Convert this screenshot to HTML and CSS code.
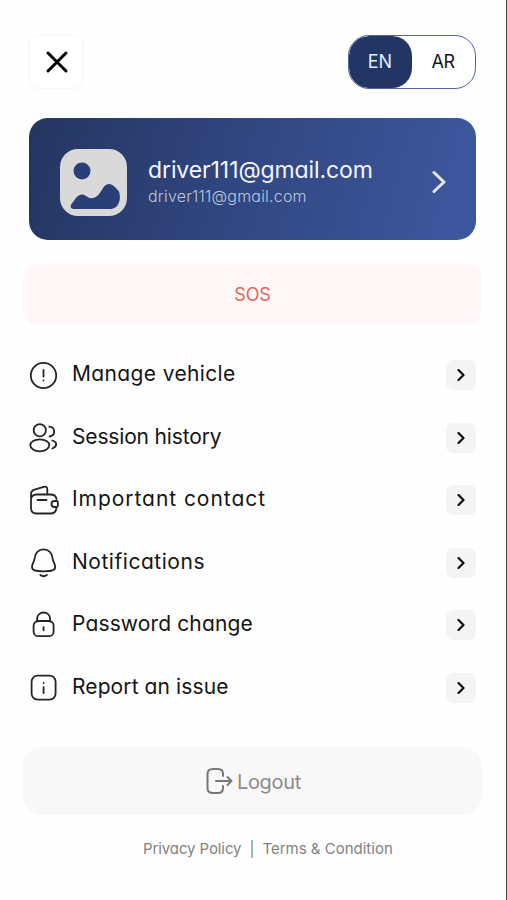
FILE: index.html
```
<!DOCTYPE html>
<html lang="en">
<head>
<meta charset="utf-8">
<title>Menu</title>
<link rel="stylesheet" href="styles.css">
</head>
<body>
<main class="screen">
  <header class="top">
    <button class="close" aria-label="Close"><svg width="24" height="24" viewBox="0 0 24 24"><path d="M3 3 21 21M21 3 3 21"/></svg></button>
    <div class="lang"><span class="lang-on">EN</span><span class="lang-off">AR</span></div>
  </header>
  <section class="profile">
    <svg class="avatar" width="67" height="67" viewBox="0 0 67 67"><rect width="67" height="67" rx="18" fill="#d9d9d9"/><circle cx="22" cy="22" r="8.500" fill="#293f76"/><path d="M12 59.500C9.500 58 11 55.500 13 53C16 49 18.500 45 22.500 45.500C26 46 28 50 33 49C41 48 42 35 49 35C53 35 56 39 59 42.500C61.500 50 59 60 50 60H15Q13 60 12 59.500Z" fill="#293f76"/></svg>
    <div class="who"><div class="name">driver111@gmail.com</div><div class="mail">driver111@gmail.com</div></div>
    <svg class="go" width="14" height="24" viewBox="0 0 14 24"><path d="M2 2.500 12 12 2 21.500"/></svg>
  </section>
  <button class="sos">SOS</button>
  <nav class="menu">
    <a class="row"><svg class="icon" viewBox="0 0 30 30"><circle cx="14.500" cy="15.500" r="12.700"/><path d="M14.500 10V16.500M14.500 20.300V20.600"/></svg><span class="label manage">Manage vehicle</span><span class="next"><svg width="8" height="12" viewBox="0 0 8 12"><path d="M1.500 1 6.500 6 1.500 11"/></svg></span></a>
    <a class="row"><svg class="icon" viewBox="0 0 30 30"><circle cx="10.800" cy="7.300" r="6.100"/><ellipse cx="10.800" cy="22.300" rx="9.500" ry="6"/><path d="M20.200 3.700C26.500 4 27 12.500 20.500 13.500M23.300 17.500C28.500 19 28.500 23.500 23.300 25.500"/></svg><span class="label session">Session history</span><span class="next"><svg width="8" height="12" viewBox="0 0 8 12"><path d="M1.500 1 6.500 6 1.500 11"/></svg></span></a>
    <a class="row"><svg class="icon" viewBox="0 0 30 30"><path d="M27.500 14C27 11 25 9.500 21.500 9.500H7.500C4 9.500 2 11.500 2 15V23C2 26.500 4 28.500 7.500 28.500H21.500C25 28.500 27 26.500 27.500 23M2 13V9C2 6.500 3 5.500 5.500 4.700L14.700 1.800C17 1.100 18.300 2.200 18.300 4.200V9.500M8.500 15H17.500M27.500 16H25.500C21.500 16 21.500 22 25.500 22H27.500Q28.900 22 28.900 20.500V17.500Q28.900 16 27.500 16Z"/></svg><span class="label contact">Important contact</span><span class="next"><svg width="8" height="12" viewBox="0 0 8 12"><path d="M1.500 1 6.500 6 1.500 11"/></svg></span></a>
    <a class="row"><svg class="icon" viewBox="0 0 30 30"><path d="M14.600 1.300C9.500 1.300 6 5 5.700 10C5.500 13.500 3 15.500 3 19C3 22.500 6.500 23.300 14.600 23.300S26.200 22.500 26.200 19C26.200 15.500 23.700 13.500 23.500 10C23.200 5 19.700 1.300 14.600 1.300ZM11.300 27Q14.600 29.500 17.900 27"/></svg><span class="label notify">Notifications</span><span class="next"><svg width="8" height="12" viewBox="0 0 8 12"><path d="M1.500 1 6.500 6 1.500 11"/></svg></span></a>
    <a class="row"><svg class="icon" viewBox="0 0 30 30"><rect x="4.600" y="11" width="20" height="15.200" rx="4.800"/><path d="M8.100 11.500V9C8.100 .3 21.100 .3 21.100 9V11.500M14.600 17.200V20.300"/></svg><span class="label password">Password change</span><span class="next"><svg width="8" height="12" viewBox="0 0 8 12"><path d="M1.500 1 6.500 6 1.500 11"/></svg></span></a>
    <a class="row"><svg class="icon" viewBox="0 0 30 30"><rect x="2.600" y="2.600" width="24" height="24" rx="6"/><path d="M14.600 14.100V20.100M14.600 9.900V10.100"/></svg><span class="label report">Report an issue</span><span class="next"><svg width="8" height="12" viewBox="0 0 8 12"><path d="M1.500 1 6.500 6 1.500 11"/></svg></span></a>
  </nav>
  <button class="logout"><svg width="27" height="28" viewBox="0 0 27 28"><path d="M17 9V7C17 3 15 2 12 2H7C3.500 2 1.500 3.500 1.500 7V21C1.500 24.500 3.500 26 7 26H12C15 26 17 25 17 21V19M10 14H25.500M21.500 10 25.500 14 21.500 18"/></svg><span>Logout</span></button>
  <footer class="legal"><a class="privacy">Privacy Policy</a><i>|</i><a class="terms">Terms &amp; Condition</a></footer>
</main>
</body>
</html>
```
FILE: styles.css
```
* { box-sizing: border-box; }
body { margin: 0; background: #fefefe; font-family: Inter, sans-serif; font-feature-settings: "cv11"; color: #151515; }
button { font: inherit; font-feature-settings: inherit; border: 0; padding: 0; }
svg { flex: none; fill: none; stroke-linecap: round; stroke-linejoin: round; }
.screen { height: 900px; border-right: 1px solid #49494b; padding: 35px 24px 0 23px; display: flex; flex-direction: column; overflow: hidden; }
.top { display: flex; justify-content: space-between; height: 54px; padding: 0 6.5px 0 6px; }
.close { width: 54px; height: 54px; border: 1px solid #f6f6f6; border-radius: 9px; background: #fff; display: flex; align-items: center; justify-content: center; }
.close svg { stroke: #000; stroke-width: 3; margin-left: 1px; }
.lang { width: 128px; border: 1px solid #52649c; border-radius: 21px; display: flex; background: #fff; font-size: 18px; line-height: 52px; text-align: center; overflow: hidden; }
.lang-on { width: 63px; background: #233564; color: #e6ecf9; border-radius: 20px; }
.lang-off { flex: 1; letter-spacing: -.4px; }
.profile { margin: 29px 6.5px 0 6px; height: 122px; flex: none; border-radius: 19px; background: linear-gradient(105deg, #243560, #304680 45%, #3d579e 95%); display: flex; align-items: center; padding: 6px 29.5px 0 31px; }
.avatar { margin-right: 21px; }
.who { flex: 1; white-space: nowrap; }
.name { font-size: 23px; line-height: 28px; color: #f5f7ff; letter-spacing: -.1px; }
.mail { font-size: 16px; line-height: 24px; color: #bcc7df; font-weight: 300; letter-spacing: .2px; }
.go { stroke: #e3e9f7; stroke-width: 3; }
.sos { margin-top: 24px; height: 60px; flex: none; border-radius: 14px; background: #fff7f7; color: #df6656; font-size: 18px; letter-spacing: -.2px; }
.menu { margin-top: 20px; }
.row { height: 62.5px; display: flex; align-items: center; padding: 0 6px; }
.icon { width: 30px; height: 30px; stroke: #242424; stroke-width: 1.8; }
.label { flex: 1; margin-left: 13px; font-size: 21px; line-height: 26px; padding-bottom: 2px; white-space: nowrap; }
.manage { letter-spacing: .36px; }
.session { letter-spacing: -.16px; }
.contact { letter-spacing: .95px; }
.notify { letter-spacing: .53px; }
.password { letter-spacing: .13px; }
.report { letter-spacing: .1px; }
.next { width: 30px; height: 30px; border-radius: 7px; background: #f4f4f4; display: flex; align-items: center; justify-content: center; }
.next svg { stroke: #111; stroke-width: 2.2; }
.logout { margin-top: 28px; height: 68px; flex: none; border-radius: 20px; background: #f8f8f8; color: #8b8b8b; font-size: 20px; letter-spacing: -.3px; padding-left: 2px; display: flex; align-items: center; justify-content: center; gap: 4px; }
.logout svg { stroke: #777; stroke-width: 2; }
.logout span { padding-top: 2px; }
.legal { margin: 24px 0 0 120px; display: flex; font-size: 15px; line-height: 20px; color: #828282; white-space: nowrap; }
.privacy { letter-spacing: -.1px; }
.legal i { font-style: normal; margin: 0 8px; }
```
